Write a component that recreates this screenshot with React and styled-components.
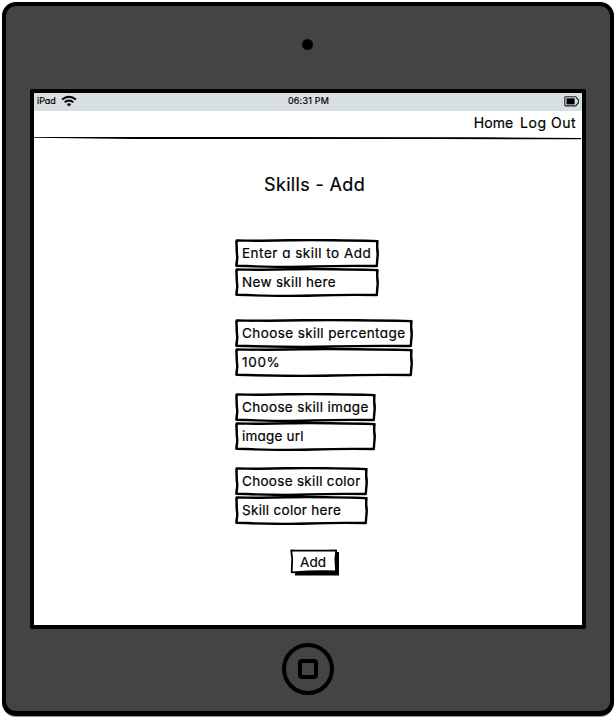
import React from "react";
import styled, { createGlobalStyle } from "styled-components";

const Global = createGlobalStyle`
  * { box-sizing: border-box; }
  body {
    margin: 0;
    background: #fff;
    font-family: Inter, Lato, sans-serif;
    font-feature-settings: "cv11";
    color: #000;
  }
`;

const Page = styled.div`
  width: 616px;
  height: 718px;
  padding: 2px 0 0 2px;
  overflow: hidden;
`;

const Device = styled.main`
  width: 612px;
  height: 714px;
  border: 4px solid #000;
  border-bottom-width: 5px;
  border-radius: 14px;
  background: #444;
  box-shadow: 0 1px 0 #999;
  display: flex;
  flex-direction: column;
  padding-left: 24px;
`;

const CameraBar = styled.div`
  height: 83px;
  width: 555px;
  display: flex;
  justify-content: center;
  padding-top: 33px;
`;

const Camera = styled.div`
  width: 11px;
  height: 11px;
  border-radius: 50%;
  background: #000;
`;

const Screen = styled.section`
  width: 556px;
  height: 540px;
  border: 4px solid #000;
  border-radius: 2px;
  background: #fff;
  display: flex;
  flex-direction: column;
`;

const StatusBar = styled.div`
  height: 18px;
  flex: none;
  background: #d7dfe1;
  display: grid;
  grid-template-columns: 1fr auto 1fr;
  align-items: center;
  padding: 0 2px 2px 3px;
  font-size: 9px;
  line-height: 16px;
`;

const StatusLeft = styled.div`
  display: flex;
  align-items: center;
  gap: 5px;
`;

const StatusRight = styled.div`
  display: flex;
  justify-content: flex-end;
`;

const Text = styled.span`
  white-space: pre;
  letter-spacing: ${(p) => p.$track || 0}px;
  -webkit-text-stroke: 0.2px #000;
`;

const Nav = styled.nav`
  height: 25px;
  flex: none;
  display: flex;
  justify-content: flex-end;
  gap: 7px;
  padding-right: 6px;
  font-size: 14px;
  line-height: 24px;
`;

const Rule = styled.svg`
  display: block;
  flex: none;
  width: 548px;
  height: 4px;
`;

const Title = styled.h1`
  margin: 32px 0 0 230px;
  font-size: 18px;
  font-weight: 400;
  line-height: 26px;
`;

const Form = styled.form`
  margin: 41px 0 0 201px;
  display: flex;
  flex-direction: column;
  align-items: flex-start;
`;

const Group = styled.div`
  width: ${(p) => p.$width}px;
  margin-top: ${(p) => p.$gap}px;
  display: flex;
  flex-direction: column;
`;

const Box = styled.div`
  position: relative;
  height: 29px;
  padding-left: 7px;
  font-size: 13.5px;
  line-height: 29px;
`;

const Outline = styled.svg`
  position: absolute;
  inset: 0;
`;

const AddButton = styled.button`
  position: relative;
  width: 50px;
  height: 27px;
  margin: 24px 0 0 55px;
  padding: 0 4px 0 0;
  border: 0;
  background: none;
  font: inherit;
  font-feature-settings: inherit;
  font-size: 13.5px;
  line-height: 25px;
  color: #000;
`;

const Label = styled.span`
  position: relative;
`;

const HomeBar = styled.div`
  width: 556px;
  padding-top: 14px;
  display: flex;
  justify-content: center;
`;

const HomeButton = styled.div`
  width: 52px;
  height: 52px;
  border: 4px solid #000;
  border-radius: 50%;
  display: grid;
  place-items: center;
`;

const HomeSquare = styled.div`
  width: 20px;
  height: 20px;
  border: 4px solid #000;
  border-radius: 4px;
`;

function SketchBox({ width: w, track, children }) {
  return (
    <Box>
      <Outline width={w} height="29" fill="none" stroke="#000" strokeLinejoin="round">
        <path
          strokeWidth="2.4"
          d={`M1.7 1.4 Q${w * 0.2} 2.1 ${w * 0.38} 1.3 T${w - 1.5} 2.1 Q${w - 2.2} 9 ${w - 1.3} 15 L${w - 2.2} 27 Q${w * 0.75} 26.5 ${w * 0.55} 27.5 T1.5 26.8 L2.3 18 Q1.2 10 1.7 1.4 Z`}
        />
        <path strokeWidth="1.2" d={`M1 1.8 L2.4 12 L1 27.4 M${w - 2.8} 2 L${w - 1} 12 L${w - 2} 27.5`} />
      </Outline>
      <Label><Text $track={track}>{children}</Text></Label>
    </Box>
  );
}

const groups = [
  { width: 144, gap: 0, rows: [["Enter a skill to Add", 0.5], ["New skill here", 0.32]] },
  { width: 178, gap: 22, rows: [["Choose skill percentage", 0.4], ["100%", 0.7]] },
  { width: 141, gap: 16, rows: [["Choose skill image", 0.34], ["image url", 0.2]] },
  { width: 133, gap: 16, rows: [["Choose skill color", 0.3], ["Skill color here", 0.3]] },
];

export default function App() {
  return (
    <Page>
      <Global />
      <Device>
        <CameraBar><Camera /></CameraBar>
        <Screen>
          <StatusBar>
            <StatusLeft>
              <Text $track={-0.05}>iPad</Text>
              <svg width="16" height="12" viewBox="0 0 16 12" fill="none" stroke="#000" strokeWidth="1.9">
                <path d="M1 4.6 Q8 -.9 15 4.6 M3.6 7.2 Q8 3.7 12.4 7.2" />
                <path fill="#000" stroke="none" d="M5.8 9.2 Q8 7.3 10.2 9.2 L8 11.6 Z" />
              </svg>
            </StatusLeft>
            <Text $track={0.2}>06:31 PM</Text>
            <StatusRight>
              <svg width="16" height="11" viewBox="0 0 16 11">
                <path fill="none" stroke="#222" strokeWidth="1.1" d="M1.6 .8 H11.5 Q12.5 .8 12.7 2.2 L14.4 3.8 V7 L12.7 8.6 Q12.5 9.9 11.5 9.9 H1.6 Q.8 9.9 .8 9 V1.7 Q.8 .8 1.6 .8 Z" />
                <path d="M2.5 2.3 H10.6 V8.4 H2.5 Z" />
              </svg>
            </StatusRight>
          </StatusBar>
          <Nav>
            <Text $track={0}>Home</Text>
            <Text $track={0.5}>Log Out</Text>
          </Nav>
          <Rule viewBox="0 0 548 4">
            <path d="M0 1.1 L110 1 L450 1.3 L547 2 V3.3 L400 3 L100 3 L0 1.7 Z" />
          </Rule>
          <Title><Text $track={0.35}>Skills - Add</Text></Title>
          <Form onSubmit={(e) => e.preventDefault()}>
            {groups.map((g) => (
              <Group key={g.width} $width={g.width} $gap={g.gap}>
                {g.rows.map(([text, track]) => (
                  <SketchBox key={text} width={g.width} track={track}>{text}</SketchBox>
                ))}
              </Group>
            ))}
            <AddButton>
              <Outline width="50" height="27">
                <path d="M5 4 L49 3 V26.4 H5 Z" />
                <path fill="#fff" stroke="#000" strokeWidth="1.8" strokeLinejoin="round" d="M1.2 1.3 Q18 2 46.2 1.5 L45.4 10 L46 22.3 Q25 21.5 1.7 23.4 L2.2 10 Z" />
              </Outline>
              <Label><Text $track={0}>Add</Text></Label>
            </AddButton>
          </Form>
        </Screen>
        <HomeBar><HomeButton><HomeSquare /></HomeButton></HomeBar>
      </Device>
    </Page>
  );
}
